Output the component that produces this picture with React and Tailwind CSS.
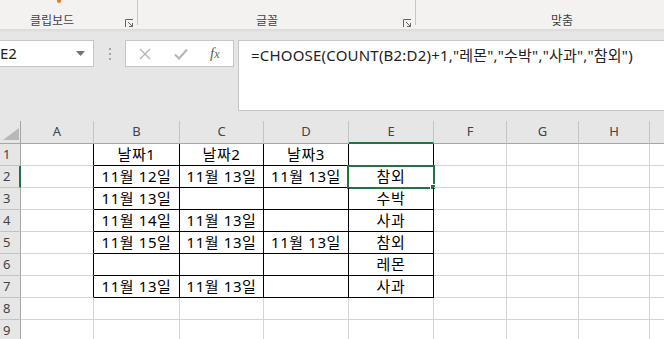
const COLS = [
  { key: 'A', w: 'w-[73px]' },
  { key: 'B', w: 'w-[86px]' },
  { key: 'C', w: 'w-[84px]' },
  { key: 'D', w: 'w-[85px]' },
  { key: 'E', w: 'w-[85px]' },
  { key: 'F', w: 'w-[73px]' },
  { key: 'G', w: 'w-[72px]' },
  { key: 'H', w: 'w-[71px]' },
  { key: 'I', w: 'w-[72px]', hidden: true },
]

const DATA = {
  1: { B: '날짜1', C: '날짜2', D: '날짜3' },
  2: { B: '11월 12일', C: '11월 13일', D: '11월 13일', E: '참외' },
  3: { B: '11월 13일', E: '수박' },
  4: { B: '11월 14일', C: '11월 13일', E: '사과' },
  5: { B: '11월 15일', C: '11월 13일', D: '11월 13일', E: '참외' },
  6: { E: '레몬' },
  7: { B: '11월 13일', C: '11월 13일', E: '사과' },
}

const TABLE = ['B', 'C', 'D', 'E']

function Launcher() {
  return (
    <svg width="9" height="9" viewBox="0 0 9 9" className="mt-[7px]">
      <path d="M0.5 8V0.5H8" fill="none" stroke="#666" strokeWidth="1" />
      <path d="M3 3L7.5 7.5M7.5 4V7.5H4" fill="none" stroke="#666" strokeWidth="1" />
    </svg>
  )
}

function Ribbon() {
  return (
    <div className="h-[29px] bg-[#f3f2f1] flex text-[12px] text-[#444] leading-[17px]">
      <div className="w-[137px] flex items-start pt-[12px] relative">
        <div className="absolute left-[57px] top-0 w-[4px] h-[3px] bg-[#e8762b] rounded-b-sm" />
        <span className="ml-[30px]">클립보드</span>
        <span className="ml-auto mr-[3px]"><Launcher /></span>
      </div>
      <div className="w-px h-[25px] bg-[#c8c6c4]" />
      <div className="w-[277px] flex items-start pt-[12px]">
        <span className="ml-[118px]">글꼴</span>
        <span className="ml-auto mr-[3px]"><Launcher /></span>
      </div>
      <div className="w-px h-[25px] bg-[#c8c6c4]" />
      <div className="flex-1 flex items-start pt-[12px]">
        <span className="ml-[135px]">맞춤</span>
      </div>
    </div>
  )
}

function FormulaBar() {
  return (
    <div className="h-[92px] bg-[#e6e6e6] bg-gradient-to-b from-[#d9d9d9] via-[#e6e6e6] via-[4%] to-[#e6e6e6] flex items-start pt-[11px]">
      <div className="w-[94px] h-[27px] bg-white border border-l-0 border-[#c6c6c6] flex items-center text-[15px] text-[#222]">
        <span className="ml-0">E2</span>
        <svg width="9" height="5" viewBox="0 0 9 5" className="ml-auto mr-[8px]">
          <path d="M0 0H9L4.5 5Z" fill="#707070" />
        </svg>
      </div>
      <div className="w-[31px] h-[27px] flex flex-col items-center justify-center gap-[3px]">
        <div className="w-[2px] h-[2px] bg-[#a6a6a6]" />
        <div className="w-[2px] h-[2px] bg-[#a6a6a6]" />
        <div className="w-[2px] h-[2px] bg-[#a6a6a6]" />
      </div>
      <div className="w-[109px] h-[27px] bg-white border border-[#c6c6c6] flex items-center">
        <svg width="12" height="12" viewBox="0 0 12 12" className="ml-[13px]">
          <path d="M1 1L11 11M11 1L1 11" stroke="#b4b4b4" strokeWidth="1.4" />
        </svg>
        <svg width="14" height="12" viewBox="0 0 14 12" className="ml-[23px]">
          <path d="M1 6.5L5 10.5L13 1.5" fill="none" stroke="#b4b4b4" strokeWidth="2" />
        </svg>
        <span className="ml-[22px] text-[15px] italic text-[#606060] font-['Liberation_Serif',serif] leading-none">
          f<span className="text-[12px]">x</span>
        </span>
      </div>
      <div className="ml-[4px] flex-1 h-[71px] bg-white border border-r-0 border-[#c6c6c6] pl-[12px] pt-[4px] text-[15px] tracking-[0.2px] text-[#222] leading-[20px] whitespace-nowrap">
        =CHOOSE(COUNT(B2:D2)+1,"레몬","수박","사과","참외")
      </div>
    </div>
  )
}

function HeaderRow() {
  return (
    <div className="flex h-[23px]">
      <div className="w-[21px] shrink-0 bg-[#e6e6e6] border-r border-b border-[#a6a6a6] relative">
        <svg width="16" height="12" viewBox="0 0 16 12" className="absolute left-[3px] top-[7px]">
          <path d="M16 0V12H0Z" fill="#b8b8b8" />
        </svg>
      </div>
      {COLS.map((c) => (
        <div
          key={c.key}
          className={`${c.w} shrink-0 bg-[#e6e6e6] border-r border-r-[#c4c4c4] flex items-center justify-center text-[13px] text-[#444] ${
            c.key === 'E' ? 'border-b-2 border-b-[#217346]' : 'border-b border-b-[#a6a6a6]'
          }`}
        >
          {c.hidden ? '' : c.key}
        </div>
      ))}
    </div>
  )
}

function Row({ n }) {
  const row = DATA[n] || {}
  const inTable = n <= 7
  return (
    <div className="flex h-[22px]">
      <div
        className={`w-[21px] shrink-0 bg-[#e6e6e6] border-b border-b-[#c4c4c4] pl-[3px] flex items-center text-[13px] text-[#444] ${
          n === 2 ? 'border-r-2 border-r-[#217346]' : 'border-r border-r-[#a6a6a6]'
        }`}
      >
        {n}
      </div>
      {COLS.map((c) => {
        const black = inTable && TABLE.includes(c.key)
        const leftEdge = inTable && c.key === 'A'
        return (
          <div
            key={c.key}
            className={`${c.w} shrink-0 relative flex items-center justify-center text-[15px] tracking-[0.6px] text-black border-r border-b ${
              black || leftEdge ? 'border-r-black' : 'border-r-[#d4d4d4]'
            } ${black ? 'border-b-black' : 'border-b-[#d4d4d4]'}`}
          >
            {row[c.key] || ''}
            {n === 2 && c.key === 'E' && (
              <div className="absolute -left-[2px] -top-[1px] w-[88px] h-[24px] border-2 border-[#217346]">
                <div className="absolute -right-[3px] -bottom-[3px] w-[6px] h-[6px] bg-[#217346] border border-white" />
              </div>
            )}
          </div>
        )
      })}
    </div>
  )
}

export default function App() {
  return (
    <div className="w-[664px] h-[339px] overflow-hidden bg-white font-['Noto_Sans','Noto_Sans_CJK_KR',sans-serif]">
      <Ribbon />
      <FormulaBar />
      <HeaderRow />
      {[1, 2, 3, 4, 5, 6, 7, 8, 9].map((n) => (
        <Row key={n} n={n} />
      ))}
    </div>
  )
}
